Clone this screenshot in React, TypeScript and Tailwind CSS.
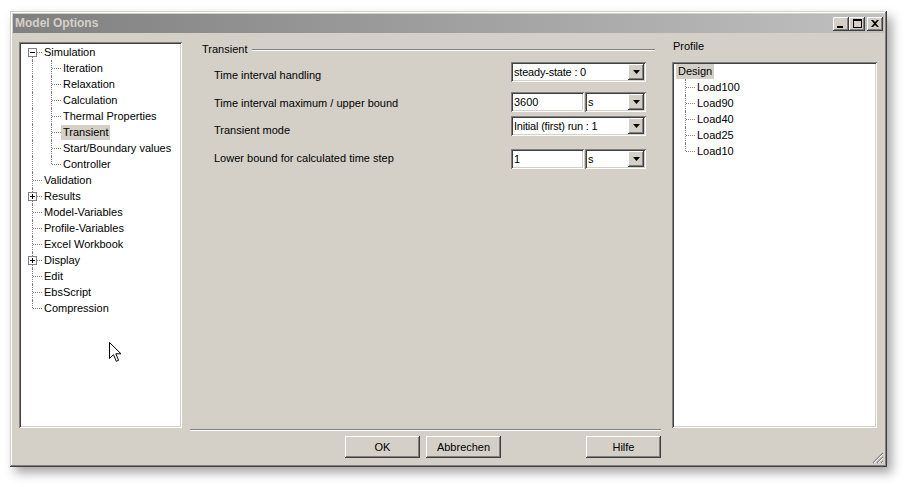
import React from 'react';

type Guide = { v: 'full' | 'top' | 'bottom' | 'none'; h?: boolean; box?: '+' | '-' };
type Row = { label: string; guides: Guide[]; selected?: boolean };

const sunken = 'shadow-[inset_1px_1px_#808080,inset_-1px_-1px_#ffffff,inset_2px_2px_#404040,inset_-2px_-2px_#d4d0c8]';
const raised = 'shadow-[inset_-1px_-1px_#404040,inset_1px_1px_#ffffff,inset_-2px_-2px_#808080,inset_2px_2px_#d4d0c8]';

const full: Guide = { v: 'full' };
const leaf: Guide = { v: 'full', h: true };
const last: Guide = { v: 'top', h: true };

const modelTree: Row[] = [
    { label: 'Simulation', guides: [{ v: 'bottom', h: true, box: '-' }] },
    { label: 'Iteration', guides: [full, leaf] },
    { label: 'Relaxation', guides: [full, leaf] },
    { label: 'Calculation', guides: [full, leaf] },
    { label: 'Thermal Properties', guides: [full, leaf] },
    { label: 'Transient', guides: [full, leaf], selected: true },
    { label: 'Start/Boundary values', guides: [full, leaf] },
    { label: 'Controller', guides: [full, last] },
    { label: 'Validation', guides: [leaf] },
    { label: 'Results', guides: [{ v: 'full', h: true, box: '+' }] },
    { label: 'Model-Variables', guides: [leaf] },
    { label: 'Profile-Variables', guides: [leaf] },
    { label: 'Excel Workbook', guides: [leaf] },
    { label: 'Display', guides: [{ v: 'full', h: true, box: '+' }] },
    { label: 'Edit', guides: [leaf] },
    { label: 'EbsScript', guides: [leaf] },
    { label: 'Compression', guides: [last] },
];

const profileTree: Row[] = [
    { label: 'Design', guides: [], selected: true },
    { label: 'Load100', guides: [leaf] },
    { label: 'Load90', guides: [leaf] },
    { label: 'Load40', guides: [leaf] },
    { label: 'Load25', guides: [leaf] },
    { label: 'Load10', guides: [last] },
];

function GuideCell({ g }: { g: Guide }) {
    return (
        <div className="relative w-[19px] h-[16px] shrink-0">
            {g.v === 'full' && <div className="absolute left-[9px] top-0 h-[16px] border-l border-dotted border-[#808080]" />}
            {g.v === 'top' && <div className="absolute left-[9px] top-0 h-[8px] border-l border-dotted border-[#808080]" />}
            {g.v === 'bottom' && <div className="absolute left-[9px] top-[8px] h-[8px] border-l border-dotted border-[#808080]" />}
            {g.h && <div className="absolute left-[10px] top-[8px] w-[9px] border-t border-dotted border-[#808080]" />}
            {g.box && (
                <div className="absolute left-[5px] top-[4px] w-[9px] h-[9px] border border-[#808080] bg-white flex items-center justify-center">
                    <div className="relative w-[5px] h-[5px] flex items-center justify-center">
                        <div className="w-[5px] h-px bg-black" />
                        {g.box === '+' && <div className="absolute left-[2px] top-0 w-px h-[5px] bg-black" />}
                    </div>
                </div>
            )}
        </div>
    );
}

function Tree({ rows }: { rows: Row[] }) {
    return (
        <div className="flex flex-col">
            {rows.map((r) => (
                <div key={r.label} className="flex h-[16px] items-center">
                    {r.guides.map((g, i) => <GuideCell key={i} g={g} />)}
                    <span className={`px-[2px] leading-[15px] whitespace-nowrap ${r.selected ? 'bg-[#d4d0c8]' : ''}`}>{r.label}</span>
                </div>
            ))}
        </div>
    );
}

function DropArrow() {
    return (
        <div className={`w-[16px] h-[16px] bg-[#d4d0c8] ${raised} flex items-center justify-center shrink-0`}>
            <svg width="7" height="4" viewBox="0 0 7 4"><polygon points="0,0 7,0 3.5,4" fill="#000" /></svg>
        </div>
    );
}

function Combo({ value, className = '' }: { value: string; className?: string }) {
    return (
        <div className={`h-[20px] bg-white ${sunken} flex items-center pl-[3px] pr-[2px] ${className}`}>
            <span className="flex-1 whitespace-nowrap overflow-hidden tracking-[-0.2px]">{value}</span>
            <DropArrow />
        </div>
    );
}

function Edit({ value }: { value: string }) {
    return (
        <div className={`h-[20px] w-[73px] bg-white ${sunken} flex items-center pl-[3px]`}>
            <span>{value}</span>
        </div>
    );
}

function Button({ label, className = '' }: { label: string; className?: string }) {
    return (
        <div className={`w-[75px] h-[22px] bg-[#d4d0c8] ${raised} flex items-center justify-center ${className}`}>
            {label}
        </div>
    );
}

function TitleButton({ children, className = '' }: { children: React.ReactNode; className?: string }) {
    return (
        <div className={`w-[16px] h-[14px] bg-[#d4d0c8] ${raised} flex items-center justify-center ${className}`}>
            {children}
        </div>
    );
}

export default function App() {
    return (
        <div className="relative w-[907px] h-[487px] bg-white pl-[10px] pt-[11px] overflow-hidden text-[11px] leading-[13px] text-black font-['Liberation_Sans',Arial,sans-serif]">
            <div className="relative w-[877px] h-[456px] bg-[#d4d0c8] p-[3px] flex flex-col shadow-[inset_-1px_-1px_#404040,inset_1px_1px_#d4d0c8,inset_-2px_-2px_#808080,inset_2px_2px_#ffffff,5px_6px_10px_rgba(0,0,0,0.35)]">
                {/* Title bar */}
                <div className="h-[19px] flex items-center pl-[2px] pr-[1px] bg-gradient-to-r from-[#808080] to-[#c0c0c0]">
                    <span className="font-bold text-[12px] text-[#d4d0c8] flex-1">Model Options</span>
                    <TitleButton>
                        <svg width="8" height="9" viewBox="0 0 8 9"><rect x="0" y="7" width="6" height="2" fill="#000" /></svg>
                    </TitleButton>
                    <TitleButton>
                        <svg width="9" height="9" viewBox="0 0 9 9"><rect x="0.5" y="0.5" width="8" height="8" fill="none" stroke="#000" /><rect x="0" y="0" width="9" height="2" fill="#000" /></svg>
                    </TitleButton>
                    <TitleButton className="ml-[2px]">
                        <svg width="8" height="7" viewBox="0 0 8 7"><path d="M0 0h2l2 2 2-2h2L5 3.5 8 7H6L4 5 2 7H0l3-3.5z" fill="#000" /></svg>
                    </TitleButton>
                </div>

                {/* Body */}
                <div className="flex pl-[6px] pt-[7px]">
                    <div className={`mt-[2px] w-[163px] h-[386px] bg-white ${sunken} pt-[2px] pl-[4px]`}>
                        <Tree rows={modelTree} />
                    </div>

                    <div className="mt-[2px] ml-[8px] w-[471px] h-[416px] flex flex-col">
                        <div className="mt-[1px] h-[13px] flex items-center pl-[12px] pr-[6px]">
                            <span>Transient</span>
                            <div className="flex-1 ml-[5px] h-[2px] border-t border-[#808080] border-b border-b-white" />
                        </div>

                        <div className="grid grid-cols-[321px_135px] h-[20px] mt-[6px]">
                            <div className="pl-[24px] pt-[7px]">Time interval handling</div>
                            <Combo value="steady-state : 0" />
                        </div>
                        <div className="grid grid-cols-[321px_135px] h-[20px] mt-[10px]">
                            <div className="pl-[24px] pt-[5px]">Time interval maximum / upper bound</div>
                            <div className="flex gap-[1px]">
                                <Edit value="3600" />
                                <Combo value="s" className="flex-1 pl-[2px]" />
                            </div>
                        </div>
                        <div className="grid grid-cols-[321px_135px] h-[20px] mt-[4px]">
                            <div className="pl-[24px] pt-[8px]">Transient mode</div>
                            <Combo value="Initial (first) run : 1" />
                        </div>
                        <div className="grid grid-cols-[321px_135px] h-[20px] mt-[13px]">
                            <div className="pl-[24px] pt-[3px]">Lower bound for calculated time step</div>
                            <div className="flex gap-[1px]">
                                <Edit value="1" />
                                <Combo value="s" className="flex-1 pl-[2px]" />
                            </div>
                        </div>

                        <div className="flex-1" />
                        <div className="h-[2px] border-t border-[#808080] border-b border-b-white" />
                        <div className="flex mt-[5px]">
                            <Button label="OK" className="ml-[155px]" />
                            <Button label="Abbrechen" className="ml-[6px]" />
                            <Button label="Hilfe" className="ml-auto" />
                        </div>
                    </div>

                    <div className="ml-[11px] w-[205px] flex flex-col">
                        <div className="h-[13px] pl-[1px]">Profile</div>
                        <div className={`mt-[9px] h-[366px] bg-white ${sunken} pt-[1px] pl-[4px]`}>
                            <Tree rows={profileTree} />
                        </div>
                    </div>
                </div>

                {/* Resize grip */}
                <svg className="absolute right-[3px] bottom-[3px]" width="12" height="12" viewBox="0 0 12 12">
                    <path d="M11 1L1 11M11 5L5 11M11 9L9 11" stroke="#808080" strokeWidth="1.2" />
                    <path d="M11 2L2 11M11 6L6 11M11 10L10 11" stroke="#ffffff" strokeWidth="1" />
                </svg>
            </div>

            {/* Mouse pointer */}
            <svg className="absolute left-[109px] top-[342px]" width="13" height="21" viewBox="0 0 13 21">
                <path d="M0.5 0.5V16.5L4.5 12.7L7.3 19.3L9.6 18.3L6.8 11.8H12Z" fill="#fff" stroke="#000" strokeWidth="1" strokeLinejoin="miter" />
            </svg>
        </div>
    );
}
